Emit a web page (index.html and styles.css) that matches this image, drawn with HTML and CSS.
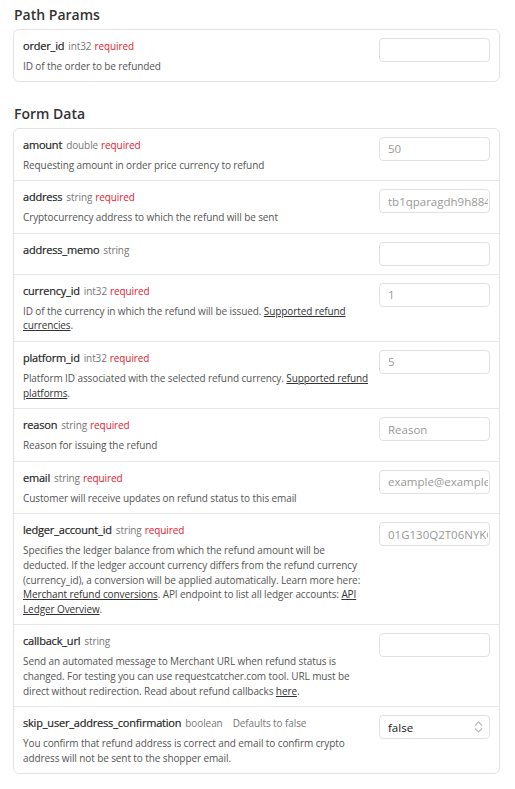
FILE: index.html
```html
<!DOCTYPE html>
<html>
<head>
<meta charset="utf-8">
<link rel="stylesheet" href="styles.css">
</head>
<body>
<section class="section">
  <h2 class="heading">Path Params</h2>
  <div class="card">
    <div class="row">
      <div class="info">
        <div class="title"><span class="name">order_id</span><span class="type">int32</span><span class="req">required</span></div>
        <div class="desc">ID of the order to be refunded</div>
      </div>
      <div class="control"><input class="field" type="text"></div>
    </div>
  </div>
</section>
<section class="section second">
  <h2 class="heading">Form Data</h2>
  <div class="card">
    <div class="row">
      <div class="info">
        <div class="title"><span class="name">amount</span><span class="type">double</span><span class="req">required</span></div>
        <div class="desc">Requesting amount in order price currency to refund</div>
      </div>
      <div class="control"><input class="field" type="text" placeholder="50"></div>
    </div>
    <div class="row">
      <div class="info">
        <div class="title"><span class="name">address</span><span class="type">string</span><span class="req">required</span></div>
        <div class="desc">Cryptocurrency address to which the refund will be sent</div>
      </div>
      <div class="control"><input class="field" type="text" placeholder="tb1qparagdh9h884kmcaa6ug5yn3lyrasq0ffa8qh7"></div>
    </div>
    <div class="row">
      <div class="info">
        <div class="title"><span class="name">address_memo</span><span class="type">string</span></div>
      </div>
      <div class="control"><input class="field" type="text"></div>
    </div>
    <div class="row">
      <div class="info">
        <div class="title"><span class="name">currency_id</span><span class="type">int32</span><span class="req">required</span></div>
        <div class="desc">ID of the currency in which the refund will be issued. <a href="#">Supported refund currencies</a>.</div>
      </div>
      <div class="control"><input class="field" type="text" placeholder="1"></div>
    </div>
    <div class="row">
      <div class="info">
        <div class="title"><span class="name">platform_id</span><span class="type">int32</span><span class="req">required</span></div>
        <div class="desc">Platform ID associated with the selected refund currency. <a href="#">Supported refund platforms</a>.</div>
      </div>
      <div class="control"><input class="field" type="text" placeholder="5"></div>
    </div>
    <div class="row">
      <div class="info">
        <div class="title"><span class="name">reason</span><span class="type">string</span><span class="req">required</span></div>
        <div class="desc">Reason for issuing the refund</div>
      </div>
      <div class="control"><input class="field" type="text" placeholder="Reason"></div>
    </div>
    <div class="row">
      <div class="info">
        <div class="title"><span class="name">email</span><span class="type">string</span><span class="req">required</span></div>
        <div class="desc">Customer will receive updates on refund status to this email</div>
      </div>
      <div class="control"><input class="field" type="text" placeholder="example@example.com"></div>
    </div>
    <div class="row">
      <div class="info">
        <div class="title"><span class="name">ledger_account_id</span><span class="type">string</span><span class="req">required</span></div>
        <div class="desc">Specifies the ledger balance from which the refund amount will be deducted. If the ledger account currency differs from the refund currency (currency_id), a conversion will be applied automatically. Learn more here: <a href="#">Merchant refund conversions</a>. API endpoint to list all ledger accounts: <a href="#">API Ledger Overview</a>.</div>
      </div>
      <div class="control"><input class="field" type="text" placeholder="01G130Q2T06NYKGN5B2WXG7RNE"></div>
    </div>
    <div class="row">
      <div class="info">
        <div class="title"><span class="name">callback_url</span><span class="type">string</span></div>
        <div class="desc">Send an automated message to Merchant URL when refund status is changed. For testing you can use requestcatcher.com tool. URL must be direct without redirection. Read about refund callbacks <a href="#">here</a>.</div>
      </div>
      <div class="control"><input class="field" type="text"></div>
    </div>
    <div class="row">
      <div class="info">
        <div class="title"><span class="name">skip_user_address_confirmation</span><span class="type">boolean</span><span class="default">Defaults to false</span></div>
        <div class="desc">You confirm that refund address is correct and email to confirm crypto address will not be sent to the shopper email.</div>
      </div>
      <div class="control">
        <div class="select">
          <span class="select-value">false</span>
          <svg class="chevrons" width="9" height="14" viewBox="0 0 9 14"><path d="M1 5.5 L4.5 2 L8 5.5 M1 8.5 L4.5 12 L8 8.5" fill="none" stroke="#b8b8b8" stroke-width="1.1"/></svg>
        </div>
      </div>
    </div>
  </div>
</section>
</body>
</html>
```
FILE: styles.css
```css
* { box-sizing: border-box; }
body {
  margin: 0;
  padding: 6px 15px 0 13px;
  background: #fff;
  font-family: "Open Sans", "Noto Sans", sans-serif;
  color: #333;
}
.section.second { margin-top: 23px; }
.heading {
  margin: 0 0 5px 1px;
  font-size: 14px;
  line-height: 18px;
  font-weight: 600;
  color: #333;
}
.card {
  border: 1px solid #e3e3e3;
  border-radius: 6px;
  background: #fff;
}
.row {
  display: flex;
  align-items: flex-start;
  padding: 8px 9px 8px 9px;
  border-top: 1px solid #e6e6e6;
}
.row:first-child { border-top: none; }
.section:first-child .row { padding-bottom: 7px; }
.section:first-child .card { margin-top: 1px; }
.info { flex: 1; min-width: 0; }
.title {
  display: flex;
  align-items: baseline;
  height: 16px;
  line-height: 16px;
  white-space: nowrap;
}
.title span { line-height: 16px; }
.name {
  font-size: 11px;
  letter-spacing: -0.2px;
  font-weight: 500;
  color: #1f1f1f;
  margin-right: 4px;
  -webkit-text-stroke: 0.2px #1f1f1f;
}
.type {
  font-size: 10px;
  letter-spacing: -0.1px;
  color: #777;
  margin-right: 3px;
}
.req {
  font-size: 10px;
  letter-spacing: -0.1px;
  color: #e5202e;
}
.default {
  font-size: 10px;
  letter-spacing: -0.1px;
  color: #777;
  margin-left: 7px;
}
.desc {
  margin-top: 5px;
  font-size: 10px;
  letter-spacing: -0.1px;
  line-height: 14.6px;
  color: #555;
}
.desc a { color: #333; text-decoration: underline; }
.control {
  width: 111px;
  flex: none;
  margin-left: 10px;
}
.field {
  display: block;
  width: 100%;
  height: 24px;
  border: 1px solid #e2e2e2;
  border-radius: 4px;
  padding: 0 1px 0 8px;
  font-family: "Open Sans", "Noto Sans", sans-serif;
  font-size: 11.5px;
  color: #333;
  background: #fff;
  outline: none;
}
.field::placeholder { color: #999; }
.select {
  display: flex;
  align-items: center;
  justify-content: space-between;
  height: 24px;
  border: 1px solid #e2e2e2;
  border-radius: 4px;
  padding: 0 6px 0 8px;
}
.select-value { font-size: 11.5px; color: #222; }
.chevrons { display: block; }
```
